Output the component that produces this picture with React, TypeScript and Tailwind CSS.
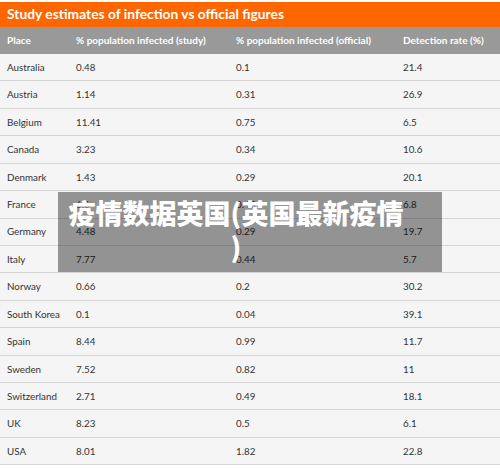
import React from 'react';

interface Row {
  place: string;
  study: string;
  official: string;
  rate: string;
}

const rows: Row[] = [
  { place: 'Australia', study: '0.48', official: '0.1', rate: '21.4' },
  { place: 'Austria', study: '1.14', official: '0.31', rate: '26.9' },
  { place: 'Belgium', study: '11.41', official: '0.75', rate: '6.5' },
  { place: 'Canada', study: '3.23', official: '0.34', rate: '10.6' },
  { place: 'Denmark', study: '1.43', official: '0.29', rate: '20.1' },
  { place: 'France', study: '6.6', official: '0.45', rate: '6.8' },
  { place: 'Germany', study: '4.48', official: '0.29', rate: '19.7' },
  { place: 'Italy', study: '7.77', official: '0.44', rate: '5.7' },
  { place: 'Norway', study: '0.66', official: '0.2', rate: '30.2' },
  { place: 'South Korea', study: '0.1', official: '0.04', rate: '39.1' },
  { place: 'Spain', study: '8.44', official: '0.99', rate: '11.7' },
  { place: 'Sweden', study: '7.52', official: '0.82', rate: '11' },
  { place: 'Switzerland', study: '2.71', official: '0.49', rate: '18.1' },
  { place: 'UK', study: '8.23', official: '0.5', rate: '6.1' },
  { place: 'USA', study: '8.01', official: '1.82', rate: '22.8' },
];

const App: React.FC = () => {
  return (
    <div className="relative w-[500px] h-[468px] bg-white pt-[2px] overflow-hidden font-['Lato','Liberation_Sans',sans-serif]">
      {/* title */}
      <div className="h-[25px] bg-[#fe6600] flex items-center pl-[7px] text-white font-bold text-[13.8px]">
        Study estimates of infection vs official figures
      </div>

      {/* header */}
      <div className="h-[27px] bg-[#999999] flex items-center text-white font-bold text-[10px]">
        <div className="w-[76px] pl-[7px]">Place</div>
        <div className="w-[160px]">% population infected (study)</div>
        <div className="w-[167px]">% population infected (official)</div>
        <div className="flex-1">Detection rate (%)</div>
      </div>

      {/* rows */}
      <div className="bg-[#f5f5f5]">
        {rows.map((r) => (
          <div
            key={r.place}
            className="h-[27.43px] flex items-center border-b border-[#d6d6d6] text-[#333] text-[9.8px]"
          >
            <div className="w-[76px] pl-[7px]">{r.place}</div>
            <div className="w-[160px]">{r.study}</div>
            <div className="w-[167px]">{r.official}</div>
            <div className="flex-1">{r.rate}</div>
          </div>
        ))}
      </div>

      {/* overlay caption */}
      <div className="absolute left-[58px] top-[192px] w-[384px] h-[80px] bg-black/40 pt-[4px]">
        <div className="ml-[9px] w-[338px] text-center text-white font-black text-[27px] leading-[34px] [line-break:anywhere] font-['Noto_Sans_CJK_SC',sans-serif]">
          疫情数据英国(英国最新疫情)
        </div>
      </div>
    </div>
  );
};

export default App;
